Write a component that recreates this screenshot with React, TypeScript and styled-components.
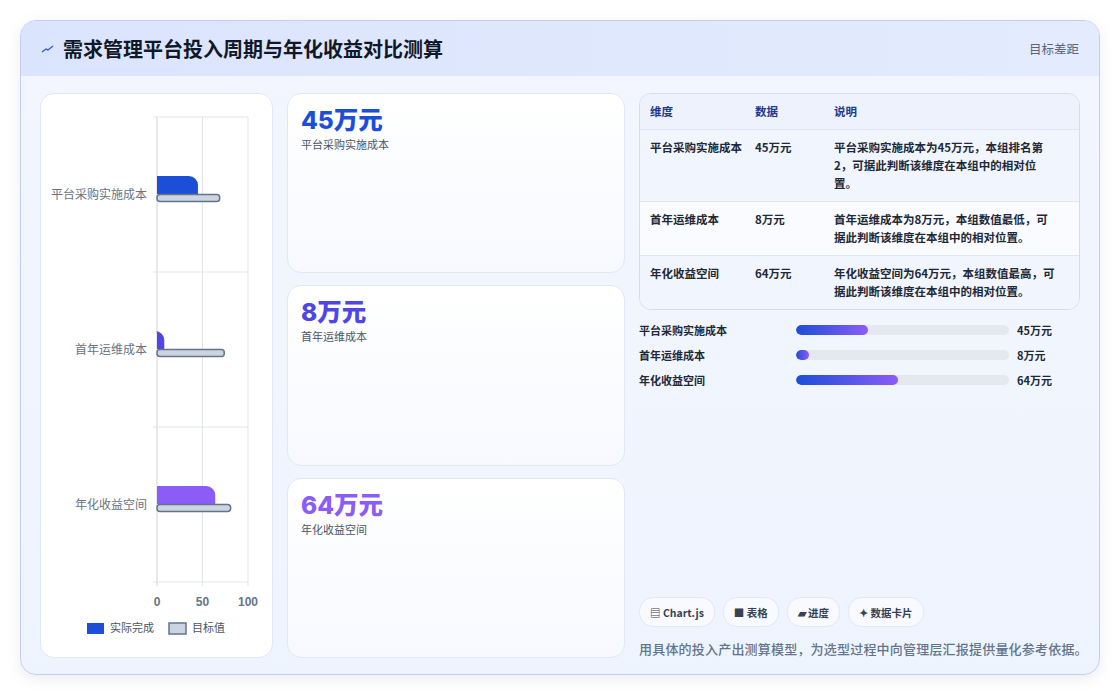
import React from "react";
import styled, { createGlobalStyle } from "styled-components";

const Global = createGlobalStyle`
  html, body { margin: 0; padding: 0; background: #fff; }
  body { font-family: Inter, "Noto Sans CJK SC", sans-serif; }
`;

const Page = styled.div`
  width: 1120px; height: 697px; box-sizing: border-box; padding: 20px 20px 22px 20px;
`;
const Frame = styled.div`
  height: 100%; box-sizing: border-box; border: 1px solid #c3cdf0; border-radius: 16px;
  background: linear-gradient(180deg, #f3f6fe 0%, #eef4fe 100%);
  overflow: hidden; display: flex; flex-direction: column;
  box-shadow: 0 4px 14px rgba(90, 110, 180, 0.12);
`;
const Header = styled.div`
  height: 55px; flex: none; display: flex; align-items: center; justify-content: space-between;
  padding: 0 20px; background: linear-gradient(90deg, #dbe4fd 0%, #e3ebfd 100%);
`;
const Title = styled.h1`
  margin: 0; font-size: 20px; font-weight: 700; color: #111827; display: flex; align-items: center; gap: 8px;
  font-family: "Noto Sans CJK SC", sans-serif;
`;
const HeadRight = styled.span`
  font-size: 12.5px; color: #5b6478; font-family: "Noto Sans CJK SC", sans-serif;
`;
const Body = styled.div`
  flex: 1; display: grid; grid-template-columns: 233px 338px 441px; gap: 14px;
  padding: 17px 19px 19px 19px;
`;
const Card = styled.div`
  background: linear-gradient(180deg, #ffffff 0%, #f7f9fe 100%); border: 1px solid #e1e7f5; border-radius: 14px;
`;
const ChartCard = styled(Card)`
  background: #fff; overflow: hidden;
`;
const Stack = styled.div`
  display: grid; grid-template-rows: repeat(3, 1fr); gap: 12px;
`;
const KpiCard = styled(Card)`
  padding: 10px 13px;
`;
const KpiValue = styled.div<{ $c: string }>`
  font-size: 24.5px; font-weight: 800; color: ${p => p.$c}; line-height: 32px;
  font-family: Inter, "Noto Sans CJK SC", sans-serif;
`;
const KpiLabel = styled.div`
  font-size: 11px; color: #4b5563; font-family: "Noto Sans CJK SC", sans-serif;
`;
const Right = styled.div`
  display: flex; flex-direction: column; font-family: "Noto Sans CJK SC", sans-serif;
`;
const Table = styled.div`
  border: 1px solid #d5dcec; border-radius: 12px; overflow: hidden; background: #f4f7fe;
`;
const TRow = styled.div<{ $head?: boolean; $alt?: boolean }>`
  display: grid; grid-template-columns: 105px 79px 1fr; padding: 8px 10px 9px;
  font-size: 11.5px; line-height: 18px; color: ${p => (p.$head ? "#1e3a8a" : "#1f2937")};
  background: ${p => (p.$head ? "#eef2fd" : p.$alt ? "#f9fbff" : "#f1f5fd")};
  border-top: ${p => (p.$head ? "none" : "1px solid #dfe5f2")};
  font-weight: ${p => (p.$head ? 700 : 600)};
  & > span:last-child { padding-right: 10px; }
`;
const Bars = styled.div`
  display: flex; flex-direction: column; gap: 9px; margin-top: 12px;
`;
const BarRow = styled.div`
  display: grid; grid-template-columns: 157px 221px 1fr; align-items: center;
  font-size: 11px; font-weight: 600; color: #1f2937; height: 16px;
`;
const Track = styled.div`
  height: 10px; border-radius: 5px; background: #e5e8ef; overflow: hidden; margin-right: 8px;
`;
const Fill = styled.div`
  height: 100%; border-radius: 5px; background: linear-gradient(90deg, #1d4ed8, #8b5cf6);
`;
const BarVal = styled.span` font-weight: 700; `;
const Spacer = styled.div` flex: 1; `;
const Pills = styled.div` display: flex; gap: 8px; `;
const Pill = styled.span`
  display: inline-flex; align-items: center; gap: 4px; height: 28px; padding: 0 10px;
  border-radius: 14px; background: #f8faff; border: 1px solid #e3e8f4; font-size: 10.5px; font-weight: 700; color: #374151;
`;
const Note = styled.p`
  margin: 12px 0 0; font-size: 13px; font-weight: 500; color: #64748b; letter-spacing: 0.2px; white-space: nowrap;
`;

const labels = ["平台采购实施成本", "首年运维成本", "年化收益空间"];
const actual = [45, 8, 64];
const target = [70, 75, 82];
const colors = ["#1d4ed8", "#4f46e5", "#8b5cf6"];

function Chart() {
  const x0 = 116, k = 0.91;
  const rowTop = [23, 178, 333];
  return (
    <svg width="233" height="563" viewBox="0 0 233 563" style={{ display: "block" }}>
      {[23, 178, 333, 488].map(y => <line key={y} x1={x0 - 4} x2={207} y1={y} y2={y} stroke="#e2e5eb" />)}
      {[x0, x0 + 45.5, x0 + 91].map((x, i) => <line key={x} x1={x} x2={x} y1={23} y2={492} stroke={i === 0 ? "#cfd4de" : "#e2e5eb"} />)}
      {rowTop.map((t, i) => {
        const c = t + 77;
        return (
          <g key={i}>
            <text x={x0 - 10} y={c + 5} textAnchor="end" fontSize="12" fill="#6b7280" fontFamily="Noto Sans CJK SC, sans-serif">{labels[i]}</text>
            <path d={`M${x0} ${c - 18} H${x0 + actual[i] * k - 9} a9 9 0 0 1 9 9 V${c} H${x0} Z`} fill={colors[i]} />
            <rect x={x0} y={c + 0.5} width={target[i] * k - 1} height={7} rx={3} fill="#cbd5e1" stroke="#64748b" strokeWidth="1.5" />
          </g>
        );
      })}
      {[0, 50, 100].map((v, i) => <text key={v} x={x0 + i * 45.5} y={512} textAnchor="middle" fontSize="12" fontWeight="600" fill="#64748b" fontFamily="Liberation Sans, sans-serif">{v}</text>)}
      <rect x={46} y={529} width={17} height={11} fill="#1d4ed8" />
      <text x={69} y={538} fontSize="11" fill="#4b5563" fontFamily="Noto Sans CJK SC, sans-serif">实际完成</text>
      <rect x={128} y={529} width={17} height={11} fill="#cbd5e1" stroke="#64748b" strokeWidth="1.5" />
      <text x={151} y={538} fontSize="11" fill="#4b5563" fontFamily="Noto Sans CJK SC, sans-serif">目标值</text>
    </svg>
  );
}

export default function App() {
  const rows = [
    ["平台采购实施成本", "45万元", "平台采购实施成本为45万元，本组排名第2，可据此判断该维度在本组中的相对位置。"],
    ["首年运维成本", "8万元", "首年运维成本为8万元，本组数值最低，可据此判断该维度在本组中的相对位置。"],
    ["年化收益空间", "64万元", "年化收益空间为64万元，本组数值最高，可据此判断该维度在本组中的相对位置。"],
  ];
  return (
    <Page>
      <Global />
      <Frame>
        <Header>
          <Title>
            <svg width="14" height="10" viewBox="0 0 14 10"><path d="M1 8 L5 5 L7 6 L12 2" stroke="#3b5bdb" strokeWidth="1.4" fill="none" /></svg>
            需求管理平台投入周期与年化收益对比测算
          </Title>
          <HeadRight>目标差距</HeadRight>
        </Header>
        <Body>
          <ChartCard><Chart /></ChartCard>
          <Stack>
            {actual.map((v, i) => (
              <KpiCard key={i}>
                <KpiValue $c={colors[i]}>{v}万元</KpiValue>
                <KpiLabel>{labels[i]}</KpiLabel>
              </KpiCard>
            ))}
          </Stack>
          <Right>
            <Table>
              <TRow $head><span>维度</span><span>数据</span><span>说明</span></TRow>
              {rows.map((r, i) => (
                <TRow key={i} $alt={i === 1}><span>{r[0]}</span><span>{r[1]}</span><span>{r[2]}</span></TRow>
              ))}
            </Table>
            <Bars>
              {actual.map((v, i) => (
                <BarRow key={i}>
                  <span>{labels[i]}</span>
                  <Track><Fill style={{ width: `${v * 0.75}%`, minWidth: 12 }} /></Track>
                  <BarVal>{v}万元</BarVal>
                </BarRow>
              ))}
            </Bars>
            <Spacer />
            <Pills>
              <Pill>▤ Chart.js</Pill>
              <Pill>■ 表格</Pill>
              <Pill>▰ 进度</Pill>
              <Pill>✦ 数据卡片</Pill>
            </Pills>
            <Note>用具体的投入产出测算模型，为选型过程中向管理层汇报提供量化参考依据。</Note>
          </Right>
        </Body>
      </Frame>
    </Page>
  );
}
